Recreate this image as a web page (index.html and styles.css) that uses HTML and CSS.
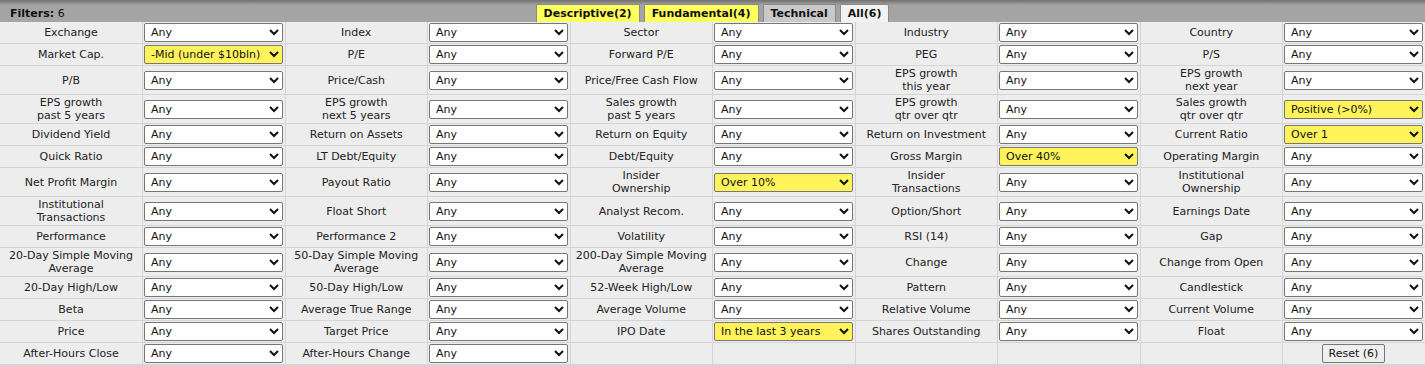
FILE: index.html
```html
<!DOCTYPE html>
<html lang="en">
<head>
  <meta charset="UTF-8">
  <title>Screener - Filters</title>
  <link rel="stylesheet" href="styles.css">
</head>
<body>
  <div class="filters-bar">
    <div class="filters-count"><b>Filters:</b> 6</div>
    <div class="tabs">
      <a class="tab is-set" href="#">Descriptive(2)</a>
      <a class="tab is-set" href="#">Fundamental(4)</a>
      <a class="tab" href="#">Technical</a>
      <a class="tab is-active" href="#">All(6)</a>
    </div>
    <div></div>
  </div>

  <table class="filters">
    <tr>
      <td class="lbl">Exchange</td><td class="fld"><select><option>Any</option><option>AMEX</option><option>NASDAQ</option><option>NYSE</option></select></td>
      <td class="lbl">Index</td><td class="fld"><select><option>Any</option><option>S&amp;P 500</option><option>DJIA</option></select></td>
      <td class="lbl">Sector</td><td class="fld"><select><option>Any</option><option>Technology</option><option>Healthcare</option></select></td>
      <td class="lbl">Industry</td><td class="fld"><select><option>Any</option><option>Stocks only (ex-Funds)</option></select></td>
      <td class="lbl">Country</td><td class="fld"><select><option>Any</option><option>USA</option><option>Foreign (ex-USA)</option></select></td>
    </tr>
    <tr>
      <td class="lbl">Market Cap.</td><td class="fld"><select class="is-set"><option>Any</option><option selected>-Mid (under $10bln)</option></select></td>
      <td class="lbl">P/E</td><td class="fld"><select><option>Any</option><option>Low (&lt;15)</option></select></td>
      <td class="lbl">Forward P/E</td><td class="fld"><select><option>Any</option><option>Low (&lt;15)</option></select></td>
      <td class="lbl">PEG</td><td class="fld"><select><option>Any</option><option>Low (&lt;1)</option></select></td>
      <td class="lbl">P/S</td><td class="fld"><select><option>Any</option><option>Low (&lt;1)</option></select></td>
    </tr>
    <tr>
      <td class="lbl">P/B</td><td class="fld"><select><option>Any</option></select></td>
      <td class="lbl">Price/Cash</td><td class="fld"><select><option>Any</option></select></td>
      <td class="lbl">Price/Free Cash Flow</td><td class="fld"><select><option>Any</option></select></td>
      <td class="lbl">EPS growth<br>this year</td><td class="fld"><select><option>Any</option></select></td>
      <td class="lbl">EPS growth<br>next year</td><td class="fld"><select><option>Any</option></select></td>
    </tr>
    <tr>
      <td class="lbl">EPS growth<br>past 5 years</td><td class="fld"><select><option>Any</option></select></td>
      <td class="lbl">EPS growth<br>next 5 years</td><td class="fld"><select><option>Any</option></select></td>
      <td class="lbl">Sales growth<br>past 5 years</td><td class="fld"><select><option>Any</option></select></td>
      <td class="lbl">EPS growth<br>qtr over qtr</td><td class="fld"><select><option>Any</option></select></td>
      <td class="lbl">Sales growth<br>qtr over qtr</td><td class="fld"><select class="is-set"><option>Any</option><option selected>Positive (&gt;0%)</option></select></td>
    </tr>
    <tr>
      <td class="lbl">Dividend Yield</td><td class="fld"><select><option>Any</option></select></td>
      <td class="lbl">Return on Assets</td><td class="fld"><select><option>Any</option></select></td>
      <td class="lbl">Return on Equity</td><td class="fld"><select><option>Any</option></select></td>
      <td class="lbl">Return on Investment</td><td class="fld"><select><option>Any</option></select></td>
      <td class="lbl">Current Ratio</td><td class="fld"><select class="is-set"><option>Any</option><option selected>Over 1</option></select></td>
    </tr>
    <tr>
      <td class="lbl">Quick Ratio</td><td class="fld"><select><option>Any</option></select></td>
      <td class="lbl">LT Debt/Equity</td><td class="fld"><select><option>Any</option></select></td>
      <td class="lbl">Debt/Equity</td><td class="fld"><select><option>Any</option></select></td>
      <td class="lbl">Gross Margin</td><td class="fld"><select class="is-set"><option>Any</option><option selected>Over 40%</option></select></td>
      <td class="lbl">Operating Margin</td><td class="fld"><select><option>Any</option></select></td>
    </tr>
    <tr>
      <td class="lbl">Net Profit Margin</td><td class="fld"><select><option>Any</option></select></td>
      <td class="lbl">Payout Ratio</td><td class="fld"><select><option>Any</option></select></td>
      <td class="lbl">Insider<br>Ownership</td><td class="fld"><select class="is-set"><option>Any</option><option selected>Over 10%</option></select></td>
      <td class="lbl">Insider<br>Transactions</td><td class="fld"><select><option>Any</option></select></td>
      <td class="lbl">Institutional<br>Ownership</td><td class="fld"><select><option>Any</option></select></td>
    </tr>
    <tr>
      <td class="lbl">Institutional<br>Transactions</td><td class="fld"><select><option>Any</option></select></td>
      <td class="lbl">Float Short</td><td class="fld"><select><option>Any</option></select></td>
      <td class="lbl">Analyst Recom.</td><td class="fld"><select><option>Any</option></select></td>
      <td class="lbl">Option/Short</td><td class="fld"><select><option>Any</option></select></td>
      <td class="lbl">Earnings Date</td><td class="fld"><select><option>Any</option></select></td>
    </tr>
    <tr>
      <td class="lbl">Performance</td><td class="fld"><select><option>Any</option></select></td>
      <td class="lbl">Performance 2</td><td class="fld"><select><option>Any</option></select></td>
      <td class="lbl">Volatility</td><td class="fld"><select><option>Any</option></select></td>
      <td class="lbl">RSI (14)</td><td class="fld"><select><option>Any</option></select></td>
      <td class="lbl">Gap</td><td class="fld"><select><option>Any</option></select></td>
    </tr>
    <tr>
      <td class="lbl">20-Day Simple Moving<br>Average</td><td class="fld"><select><option>Any</option></select></td>
      <td class="lbl">50-Day Simple Moving<br>Average</td><td class="fld"><select><option>Any</option></select></td>
      <td class="lbl">200-Day Simple Moving<br>Average</td><td class="fld"><select><option>Any</option></select></td>
      <td class="lbl">Change</td><td class="fld"><select><option>Any</option></select></td>
      <td class="lbl">Change from Open</td><td class="fld"><select><option>Any</option></select></td>
    </tr>
    <tr>
      <td class="lbl">20-Day High/Low</td><td class="fld"><select><option>Any</option></select></td>
      <td class="lbl">50-Day High/Low</td><td class="fld"><select><option>Any</option></select></td>
      <td class="lbl">52-Week High/Low</td><td class="fld"><select><option>Any</option></select></td>
      <td class="lbl">Pattern</td><td class="fld"><select><option>Any</option></select></td>
      <td class="lbl">Candlestick</td><td class="fld"><select><option>Any</option></select></td>
    </tr>
    <tr>
      <td class="lbl">Beta</td><td class="fld"><select><option>Any</option></select></td>
      <td class="lbl">Average True Range</td><td class="fld"><select><option>Any</option></select></td>
      <td class="lbl">Average Volume</td><td class="fld"><select><option>Any</option></select></td>
      <td class="lbl">Relative Volume</td><td class="fld"><select><option>Any</option></select></td>
      <td class="lbl">Current Volume</td><td class="fld"><select><option>Any</option></select></td>
    </tr>
    <tr>
      <td class="lbl">Price</td><td class="fld"><select><option>Any</option></select></td>
      <td class="lbl">Target Price</td><td class="fld"><select><option>Any</option></select></td>
      <td class="lbl">IPO Date</td><td class="fld"><select class="is-set"><option>Any</option><option selected>In the last 3 years</option></select></td>
      <td class="lbl">Shares Outstanding</td><td class="fld"><select><option>Any</option></select></td>
      <td class="lbl">Float</td><td class="fld"><select><option>Any</option></select></td>
    </tr>
    <tr>
      <td class="lbl">After-Hours Close</td><td class="fld"><select><option>Any</option></select></td>
      <td class="lbl">After-Hours Change</td><td class="fld"><select><option>Any</option></select></td>
      <td class="lbl"></td><td class="fld"></td>
      <td class="lbl"></td><td class="fld"></td>
      <td class="lbl"></td><td class="fld reset-cell"><button class="reset-btn">Reset (6)</button></td>
    </tr>
  </table>

  <div class="results-top"></div>
</body>
</html>
```

FILE: styles.css
```css
body {
  margin: 0;
  padding: 0;
  background: #fff;
  color: #222;
  font-family: Verdana, "DejaVu Sans", sans-serif;
  font-size: 11px;
  overflow: hidden;
}

.filters-bar {
  display: grid;
  grid-template-columns: 1fr auto 1fr;
  align-items: end;
  height: 22px;
  background: linear-gradient(#6f6f6f, #a3a3a3 5px, #a5a5a5);
}
.filters-count {
  align-self: center;
  padding: 4px 0 0 10px;
  color: #111;
}
.tabs {
  display: flex;
  gap: 4px;
}
.tab {
  display: block;
  height: 17px;
  line-height: 17px;
  padding: 0 7px;
  border: 1px solid #8a8a8a;
  border-bottom: none;
  border-radius: 2px 2px 0 0;
  background: #c9c9c9;
  color: #111;
  font-weight: bold;
  text-decoration: none;
}
.tab.is-set {
  background: #ffff5e;
}
.tab.is-active {
  background: #f2f2f2;
}

.filters {
  width: 100%;
  table-layout: fixed;
  border-collapse: collapse;
  background: #ededed;
}
.filters td {
  border: 1px solid #d5d5d5;
  padding: 1px 2px 1px 1px;
  line-height: 13px;
  vertical-align: middle;
}
.filters tr:first-child td {
  border-top: none;
}
.filters td:first-child {
  border-left: none;
}
.filters td:last-child {
  border-right: none;
}
.filters .lbl {
  text-align: center;
  padding: 1px 2px;
}
.filters select {
  display: block;
  width: 100%;
  height: 19px;
  padding: 0 2px;
  border: 1px solid #767676;
  border-radius: 2px;
  background-color: #fff;
  color: #111;
  font-family: Verdana, "DejaVu Sans", sans-serif;
  font-size: 11px;
}
.filters select.is-set {
  background-color: #fff35c;
}
.reset-cell {
  text-align: center;
}
.reset-btn {
  height: 19px;
  padding: 0 6px;
  border: 1px solid #767676;
  border-radius: 2px;
  background: #efefef;
  color: #111;
  font-family: Verdana, "DejaVu Sans", sans-serif;
  font-size: 11px;
}

.results-top {
  height: 20px;
  background: #ededed;
  border-top: 1px solid #d5d5d5;
}
```
